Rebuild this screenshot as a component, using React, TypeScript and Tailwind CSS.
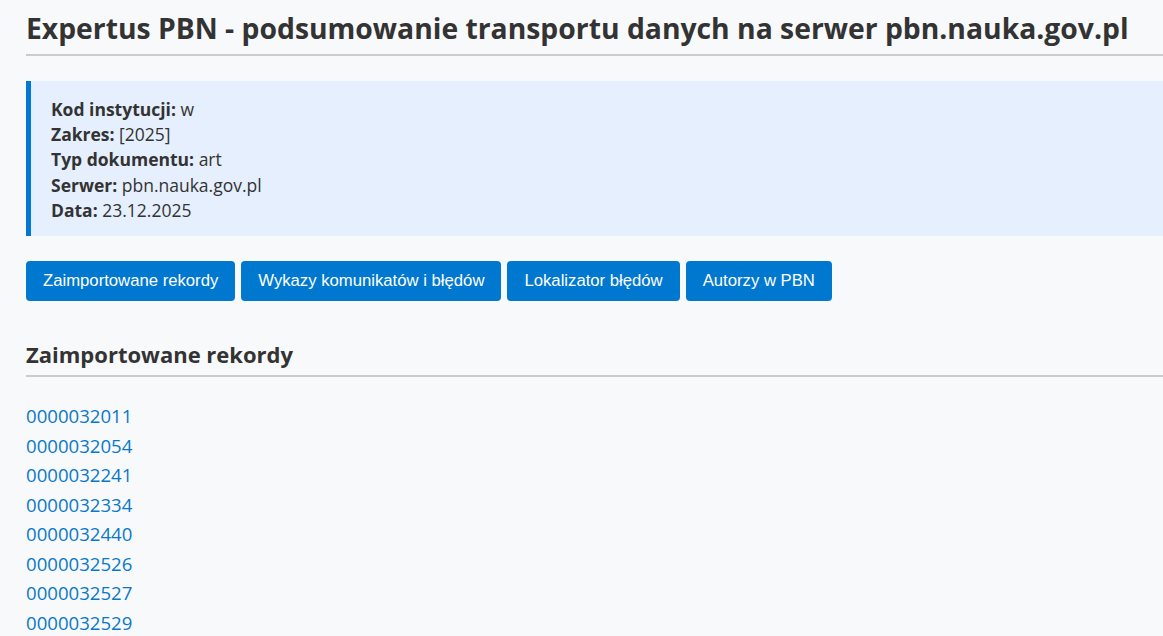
const records = [
  "0000032011",
  "0000032054",
  "0000032241",
  "0000032334",
  "0000032440",
  "0000032526",
  "0000032527",
  "0000032529",
];

const tabs = [
  "Zaimportowane rekordy",
  "Wykazy komunikatów i błędów",
  "Lokalizator błędów",
  "Autorzy w PBN",
];

export default function App() {
  return (
    <div className="h-screen bg-[#f8f9fb] pl-[26px] text-[#333] font-['Open_Sans',sans-serif] overflow-hidden">
      {/* naglowek */}
      <h1 className="pt-[10px] pb-[7px] text-[28.3px] font-bold leading-[37px] whitespace-nowrap border-b-2 border-[#cccccc]">
        Expertus PBN - podsumowanie transportu danych na serwer pbn.nauka.gov.pl
      </h1>

      {/* podsumowanie */}
      <div className="mt-[25px] bg-[#e5effd] border-l-[5px] border-[#0078d4] pl-[20px] pt-[16px] pb-[13px] text-[17.5px] leading-[25.2px]">
        <div><b>Kod instytucji:</b> w</div>
        <div><b>Zakres:</b> [2025]</div>
        <div><b>Typ dokumentu:</b> art</div>
        <div><b>Serwer:</b> pbn.nauka.gov.pl</div>
        <div><b>Data:</b> 23.12.2025</div>
      </div>

      {/* zakladki */}
      <div className="mt-[25px] flex gap-[6px]">
        {tabs.map((t) => (
          <button
            key={t}
            className="h-[40px] px-[17px] rounded-[4px] bg-[#0078d0] text-white text-[16.7px] font-['Liberation_Sans',sans-serif]"
          >
            {t}
          </button>
        ))}
      </div>

      <h2 className="mt-[39px] pb-[7px] text-[22px] font-bold leading-[28px] border-b-2 border-[#cccccc]">
        Zaimportowane rekordy
      </h2>

      <ul className="mt-[24px]">
        {records.map((r) => (
          <li key={r} className="text-[18.6px] leading-[29.5px]">
            <a href="#" className="text-[#0a78c8]">{r}</a>
          </li>
        ))}
      </ul>
    </div>
  );
}
